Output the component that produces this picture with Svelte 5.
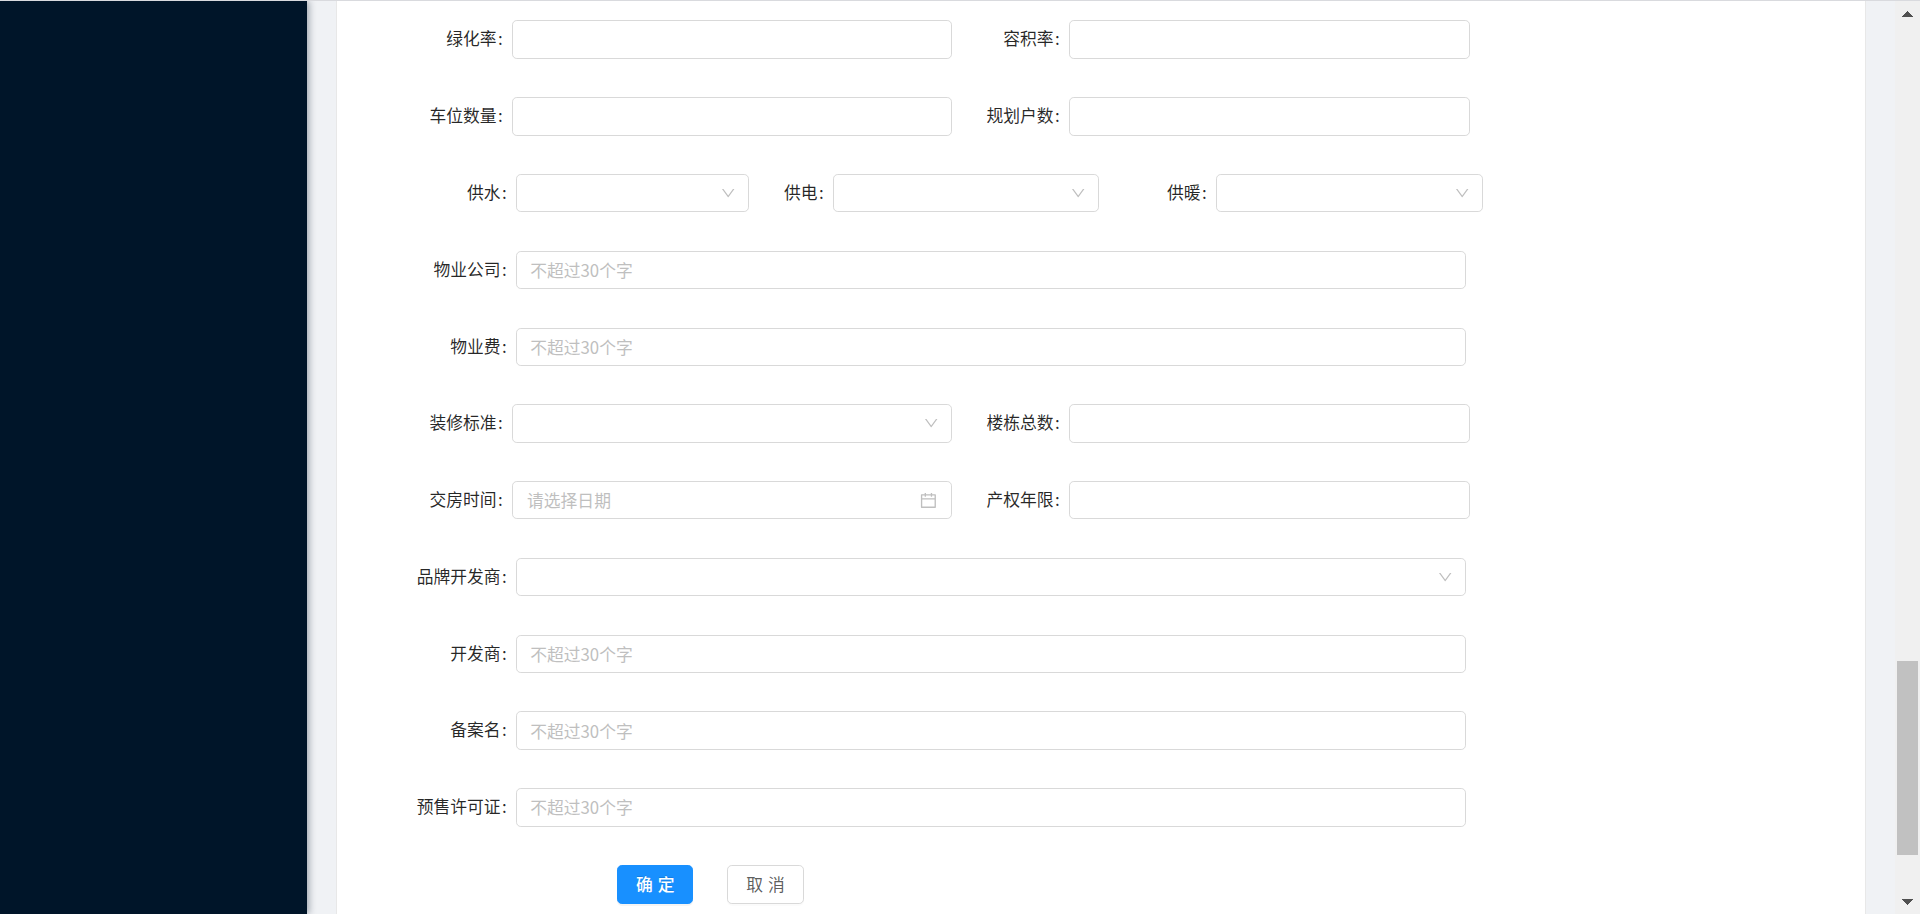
<script>
  const hint = '不超过30个字';

  const rows = [
    { layout: 'pair', fields: [{ label: '绿化率' }, { label: '容积率' }] },
    { layout: 'pair', fields: [{ label: '车位数量' }, { label: '规划户数' }] },
    {
      layout: 'triple',
      fields: [
        { label: '供水', type: 'select' },
        { label: '供电', type: 'select' },
        { label: '供暖', type: 'select' }
      ]
    },
    { layout: 'single', fields: [{ label: '物业公司', placeholder: hint }] },
    { layout: 'single', fields: [{ label: '物业费', placeholder: hint }] },
    { layout: 'pair', fields: [{ label: '装修标准', type: 'select' }, { label: '楼栋总数' }] },
    {
      layout: 'pair',
      fields: [{ label: '交房时间', type: 'date', placeholder: '请选择日期' }, { label: '产权年限' }]
    },
    { layout: 'single', fields: [{ label: '品牌开发商', type: 'select' }] },
    { layout: 'single', fields: [{ label: '开发商', placeholder: hint }] },
    { layout: 'single', fields: [{ label: '备案名', placeholder: hint }] },
    { layout: 'single', fields: [{ label: '预售许可证', placeholder: hint }] }
  ];
</script>

<div class="page">
  <aside class="sider"></aside>

  <main class="content">
    <form class="card" on:submit|preventDefault>
      {#each rows as row}
        <div class="row {row.layout}">
          {#each row.fields as field}
            <label class="label" for={field.label}>{field.label}<span class="colon">:</span></label>
            <div class="control">
              {#if field.type === 'select'}
                <button type="button" class="select" id={field.label} aria-label={field.label}>
                  <svg class="arrow" viewBox="64 64 896 896">
                    <path d="M884 256h-75c-5.1 0-9.9 2.5-12.9 6.6L512 654.2 227.9 262.6c-3-4.1-7.8-6.6-12.9-6.6h-75c-6.5 0-10.3 7.4-6.5 12.7l352.6 486.1c12.8 17.6 39 17.6 51.7 0l352.6-486.1c3.9-5.3.1-12.7-6.4-12.7z" />
                  </svg>
                </button>
              {:else}
                <input
                  type="text"
                  class:date={field.type === 'date'}
                  id={field.label}
                  placeholder={field.placeholder}
                />
                {#if field.type === 'date'}
                  <svg class="calendar" viewBox="64 64 896 896">
                    <path d="M880 184H712v-64c0-4.4-3.6-8-8-8h-56c-4.4 0-8 3.6-8 8v64H384v-64c0-4.4-3.6-8-8-8h-56c-4.4 0-8 3.6-8 8v64H144c-17.7 0-32 14.3-32 32v664c0 17.7 14.3 32 32 32h736c17.7 0 32-14.3 32-32V216c0-17.7-14.3-32-32-32zm-40 656H184V460h656v380zM184 392V256h128v48c0 4.4 3.6 8 8 8h56c4.4 0 8-3.6 8-8v-48h256v48c0 4.4 3.6 8 8 8h56c4.4 0 8-3.6 8-8v-48h128v136H184z" />
                  </svg>
                {/if}
              {/if}
            </div>
          {/each}
        </div>
      {/each}

      <div class="actions">
        <button type="submit" class="btn primary">确定</button>
        <button type="button" class="btn">取消</button>
      </div>
    </form>
  </main>

  <div class="scrollbar">
    <svg class="tip" viewBox="0 0 11 6" shape-rendering="crispEdges"><path d="M5.5 0 11 6H0z" /></svg>
    <div class="track"><div class="thumb"></div></div>
    <svg class="tip" viewBox="0 0 11 6" shape-rendering="crispEdges"><path d="M0 0h11L5.5 6z" /></svg>
  </div>
</div>

<style>
:global(body) {
  margin: 0;
  overflow: hidden;
}
.page {
  display: flex;
  box-sizing: border-box;
  height: 914px;
  overflow: hidden;
  border-top: 1px solid #d9dade;
  background: #f0f2f5;
  color: rgba(0, 0, 0, 0.85);
  font-family: "Noto Sans CJK SC", sans-serif;
  font-size: 16.8px;
}
.sider {
  flex: 0 0 307px;
  background: #001529;
  box-shadow: 2px 0 7px rgba(0, 21, 41, 0.35);
}
.content {
  flex: 1;
  padding: 0 29px;
}
.card {
  box-sizing: border-box;
  height: 100%;
  padding-top: 19.4px;
  border: solid #e8e8e8;
  border-width: 0 1px;
  background: #fff;
}
.row {
  display: grid;
  height: 38.4px;
  margin-bottom: 38.4px;
}
.pair {
  grid-template-columns: 175px 440px 117px 401px;
}
.triple {
  grid-template-columns: 179px 233px 84px 266px 117px 267px;
}
.single {
  grid-template-columns: 179px 950px;
}
.label {
  line-height: 36.4px;
  text-align: right;
  white-space: nowrap;
}
.colon {
  margin: 0 9.4px 0 1.4px;
}
.control {
  position: relative;
}
input,
.select {
  display: block;
  box-sizing: border-box;
  width: 100%;
  height: 38.4px;
  padding: 0 13.2px;
  border: 1px solid #d9d9d9;
  border-radius: 4.8px;
  background: #fff;
  font: inherit;
  color: inherit;
  outline: none;
}
input::placeholder {
  color: #bfbfbf;
  opacity: 1;
}
.date {
  padding-left: 14px;
}
.select {
  display: flex;
  align-items: center;
  justify-content: flex-end;
  padding-right: 12.6px;
  cursor: pointer;
}
.arrow {
  width: 14.4px;
  height: 14.4px;
  fill: #bfbfbf;
}
.calendar {
  position: absolute;
  top: 10.8px;
  right: 15.2px;
  width: 16.8px;
  height: 16.8px;
  fill: #bfbfbf;
}
.actions {
  display: flex;
  gap: 34px;
  padding: 0.4px 0 0 280px;
}
.btn {
  box-sizing: border-box;
  width: 76.4px;
  height: 38.4px;
  padding: 0 0 1.6px 5px;
  border: 1px solid #d9d9d9;
  border-radius: 4.8px;
  background: #fff;
  box-shadow: 0 2px 0 rgba(0, 0, 0, 0.015);
  color: rgba(0, 0, 0, 0.65);
  font: inherit;
  letter-spacing: 5px;
  white-space: nowrap;
  cursor: pointer;
}
.primary {
  border-color: #1890ff;
  background: #1890ff;
  box-shadow: 0 2px 0 rgba(0, 0, 0, 0.045);
  color: #fff;
  font-weight: 500;
  text-shadow: 0 -1px 0 rgba(0, 0, 0, 0.12);
}
.scrollbar {
  display: flex;
  flex: 0 0 25px;
  flex-direction: column;
  align-items: center;
  box-sizing: border-box;
  padding: 10px 0 9px;
  background: #f0f0f0;
}
.tip {
  width: 11px;
  height: 6px;
  fill: #505050;
}
.track {
  flex: 1;
  width: 21px;
  padding-top: 644px;
}
.thumb {
  height: 194px;
  background: #c1c1c1;
}
</style>
